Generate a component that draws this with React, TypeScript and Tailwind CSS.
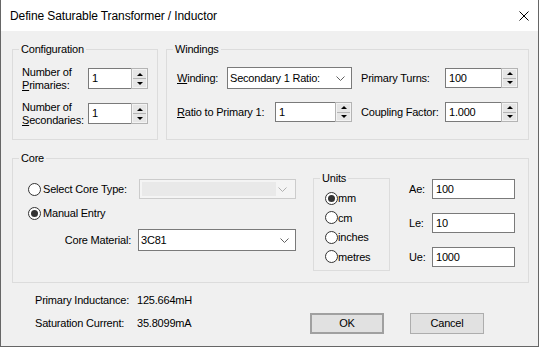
import React from "react";

function Triangle({ up }: { up: boolean }) {
  return up ? (
    <span className="h-0 w-0 border-x-[3px] border-b-[3px] border-x-transparent border-b-black" />
  ) : (
    <span className="h-0 w-0 border-x-[3px] border-t-[3px] border-x-transparent border-t-black" />
  );
}

function Spin({ value, className }: { value: string; className: string }) {
  return (
    <div className={"flex " + className}>
      <div className="flex flex-1 items-center border-y border-l border-[#7a7a7a] bg-white pl-[3px]">{value}</div>
      <div className="flex w-[17px] flex-col border border-[#b4b4b4] bg-[#f3f3f3] p-px">
        <div className="flex flex-1 items-center justify-center border-b border-[#b4b4b4] bg-[#e6e6e6]">
          <Triangle up />
        </div>
        <div className="flex flex-1 items-center justify-center bg-[#e6e6e6]">
          <Triangle up={false} />
        </div>
      </div>
    </div>
  );
}

function Chevron({ color }: { color: string }) {
  return (
    <svg width="9" height="5" viewBox="0 0 9 5" className="mr-[6px]">
      <polyline points="0.5,0.5 4.5,4.5 8.5,0.5" fill="none" stroke={color} strokeWidth="1" />
    </svg>
  );
}

function Radio({ checked, label, gap }: { checked: boolean; label: string; gap: string }) {
  return (
    <div className={"flex items-center " + gap}>
      <span className="flex h-[13px] w-[13px] items-center justify-center rounded-full border border-[#333] bg-white">
        {checked && <span className="h-[7px] w-[7px] rounded-full bg-[#333]" />}
      </span>
      <span>{label}</span>
    </div>
  );
}

function TextBox({ value }: { value: string }) {
  return (
    <div className="flex h-[20px] w-[83px] items-center border border-[#7a7a7a] bg-white pl-[3px]">{value}</div>
  );
}

export default function App() {
  return (
    <div className="flex h-[347px] w-[539px] flex-col overflow-hidden border-x border-b border-[#666] font-['Liberation_Sans',Arial,sans-serif] text-[11px] tracking-[-0.2px] text-black">
      {/* title bar */}
      <div className="flex h-[31px] shrink-0 items-center justify-between bg-white pl-[9px] pr-[9px] text-[12px] tracking-[-0.1px]">
        <span>Define Saturable Transformer / Inductor</span>
        <svg width="10" height="10" viewBox="0 0 10 10">
          <path d="M0.5 0.5 L9.5 9.5 M9.5 0.5 L0.5 9.5" stroke="#000" strokeWidth="1" />
        </svg>
      </div>

      <div className="flex flex-1 flex-col bg-[#f0f0f0] pl-[11px] pr-[9px] pt-[11px]">
        <div className="flex gap-[8px]">
          <fieldset className="h-[98px] w-[146px] border border-[#dcdcdc]">
            <legend className="ml-[6px] px-[2px] leading-[14px]">Configuration</legend>
            <div className="px-[9px]">
              <div className="mt-[12px] flex h-[21px] items-center">
                <div className="w-[66px] leading-[13px]">
                  Number of
                  <br />
                  <u className="underline-offset-1">P</u>rimaries:
                </div>
                <Spin value="1" className="h-[21px] w-[60px]" />
              </div>
              <div className="mt-[14px] flex h-[21px] items-center">
                <div className="w-[66px] leading-[13px]">
                  Number of
                  <br />
                  <u className="underline-offset-1">S</u>econdaries:
                </div>
                <Spin value="1" className="h-[21px] w-[60px]" />
              </div>
            </div>
          </fieldset>

          <fieldset className="h-[98px] flex-1 border border-[#dcdcdc]">
            <legend className="ml-[6px] px-[2px] leading-[14px]">Windings</legend>
            <div className="pl-[10px]">
              <div className="mt-[11px] flex h-[22px] items-center">
                <div className="flex w-[175px] items-center justify-between">
                  <span>
                    <u className="underline-offset-1">W</u>inding:
                  </span>
                  <div className="flex h-[22px] w-[125px] items-center justify-between border border-[#7a7a7a] bg-white pl-[2px]">
                    <span>Secondary 1 Ratio:</span>
                    <Chevron color="#606060" />
                  </div>
                </div>
                <span className="ml-[9px] w-[84px]">Primary Turns:</span>
                <Spin value="100" className="h-[20px] w-[73px]" />
              </div>
              <div className="mt-[13px] flex h-[20px] items-center">
                <div className="flex w-[175px] items-center justify-between">
                  <span>
                    <u className="underline-offset-1">R</u>atio to Primary 1:
                  </span>
                  <Spin value="1" className="h-[20px] w-[77px]" />
                </div>
                <span className="ml-[9px] w-[84px]">Coupling Factor:</span>
                <Spin value="1.000" className="h-[20px] w-[73px]" />
              </div>
            </div>
          </fieldset>
        </div>

        <fieldset className="mt-[11px] h-[132px] w-[517px] border border-[#dcdcdc]">
          <legend className="ml-[6px] px-[2px] leading-[14px]">Core</legend>
          <div className="flex pl-[15px]">
            <div className="flex w-[268px] flex-col">
              <div className="mt-[14px] flex h-[20px] items-center justify-between">
                <Radio checked={false} label="Select Core Type:" gap="gap-[2px]" />
                <div className="flex h-[20px] w-[157px] items-center border border-[#cccccc] bg-[#f4f4f4] p-[2px]">
                  <div className="h-full flex-1 bg-[#e9e9e9]" />
                  <div className="flex w-[17px] justify-end">
                    <Chevron color="#b0b0b0" />
                  </div>
                </div>
              </div>
              <div className="mt-[6px] flex h-[16px] items-center">
                <Radio checked label="Manual Entry" gap="gap-[2px]" />
              </div>
              <div className="mt-[8px] flex h-[22px] items-center justify-end gap-[7px]">
                <span>Core Material:</span>
                <div className="flex h-[22px] w-[158px] items-center justify-between border border-[#7a7a7a] bg-white pl-[2px]">
                  <span>3C81</span>
                  <Chevron color="#606060" />
                </div>
              </div>
            </div>

            <fieldset className="ml-[17px] mt-[6px] h-[100px] w-[77px] self-start border border-[#dcdcdc]">
              <legend className="ml-[6px] px-[2px] leading-[14px]">Units</legend>
              <div className="mt-[3px] flex flex-col pl-[11px]">
                <div className="flex h-[20px] items-center">
                  <Radio checked label="mm" gap="gap-0" />
                </div>
                <div className="flex h-[19.5px] items-center">
                  <Radio checked={false} label="cm" gap="gap-0" />
                </div>
                <div className="flex h-[19.5px] items-center">
                  <Radio checked={false} label="inches" gap="gap-0" />
                </div>
                <div className="flex h-[19.5px] items-center">
                  <Radio checked={false} label="metres" gap="gap-0" />
                </div>
              </div>
            </fieldset>

            <div className="ml-[19px] mt-[14px] flex flex-col gap-[14px]">
              <div className="flex h-[20px] items-center">
                <span className="w-[23px]">Ae:</span>
                <TextBox value="100" />
              </div>
              <div className="flex h-[20px] items-center">
                <span className="w-[23px]">Le:</span>
                <TextBox value="10" />
              </div>
              <div className="flex h-[20px] items-center">
                <span className="w-[23px]">Ue:</span>
                <TextBox value="1000" />
              </div>
            </div>
          </div>
        </fieldset>

        <div className="flex">
          <div className="ml-[23px] mt-[10px] flex w-[275px] flex-col gap-[9px] leading-[14px]">
            <div className="flex">
              <span className="w-[102px]">Primary Inductance:</span>
              <span>125.664mH</span>
            </div>
            <div className="flex">
              <span className="w-[102px]">Saturation Current:</span>
              <span>35.8099mA</span>
            </div>
          </div>
          <div className="mt-[30px] flex gap-[26px]">
            <button className="h-[21px] w-[74px] border-2 border-[#a0a0a0] bg-[#e1e1e1]">OK</button>
            <button className="h-[21px] w-[74px] border border-[#adadad] bg-[#e1e1e1]">Cancel</button>
          </div>
        </div>
      </div>
    </div>
  );
}
